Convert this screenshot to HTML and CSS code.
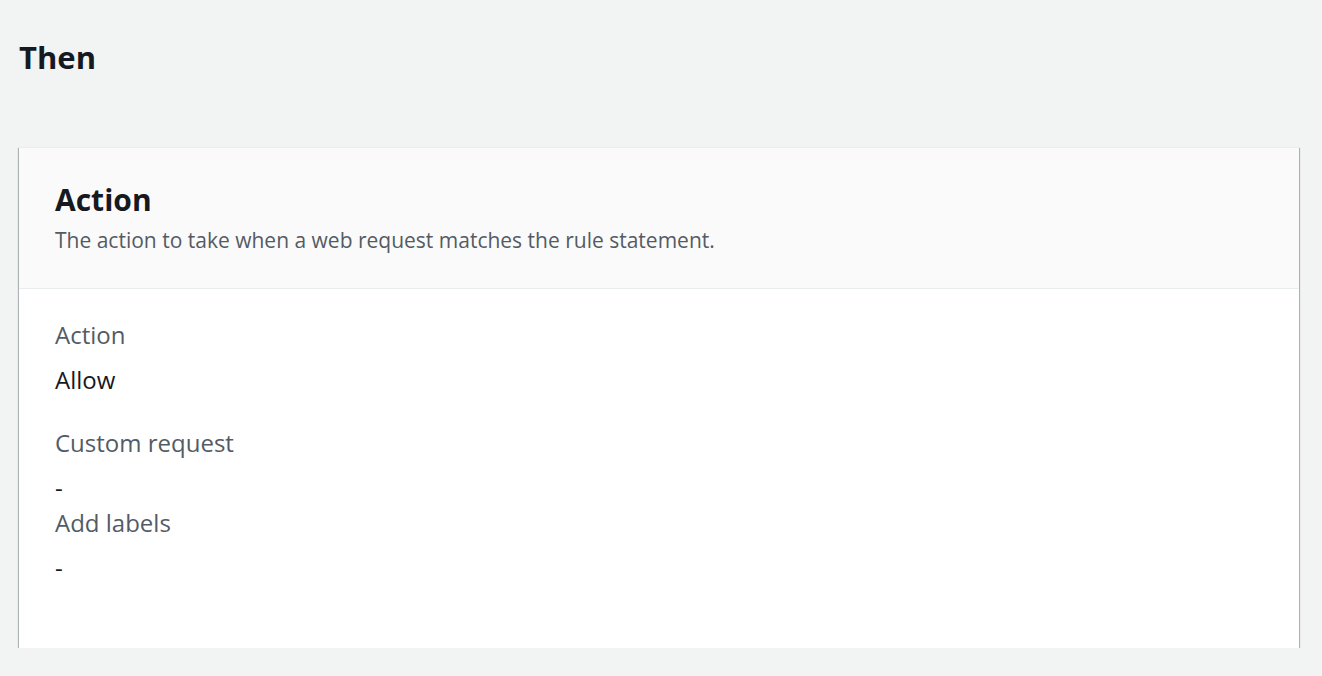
FILE: index.html
```html
<!DOCTYPE html>
<html lang="en">
<head>
<meta charset="utf-8">
<title>Then</title>
<link rel="stylesheet" href="styles.css">
</head>
<body>
<main class="page">
  <h1 class="page-title">Then</h1>
  <section class="card">
    <header class="card-header">
      <h2 class="card-title">Action</h2>
      <p class="card-desc">The action to take when a web request matches the rule statement.</p>
    </header>
    <div class="card-body">
      <div class="field">
        <div class="field-label">Action</div>
        <div class="field-value">Allow</div>
      </div>
      <div class="field field-spaced">
        <div class="field-label">Custom request</div>
        <div class="field-value">-</div>
      </div>
      <div class="field field-tight">
        <div class="field-label">Add labels</div>
        <div class="field-value">-</div>
      </div>
    </div>
  </section>
</main>
</body>
</html>
```

FILE: styles.css
```css
html, body {
  margin: 0;
  padding: 0;
  background: #f2f3f3;
}
body {
  font-family: "Open Sans", "Noto Sans", sans-serif;
  color: #16191f;
}
.page {
  padding: 39px 23px 0 19px;
}
.page-title {
  margin: 0;
  font-size: 31px;
  line-height: 36px;
  font-weight: 700;
  color: #16191f;
}
.card {
  margin-top: 72px;
  background: #ffffff;
  border-top: 1px solid #eaeded;
  box-shadow: 0 1px 1px 0 rgba(0, 28, 36, 0.55), 0 2px 1px 0 rgba(0, 28, 36, 0.15), 1px 1px 1px 0 rgba(0, 28, 36, 0.2), -1px 1px 1px 0 rgba(0, 28, 36, 0.2);
}
.card-header {
  background: #fafafa;
  border-bottom: 1px solid #eaeded;
  padding: 34px 36px 36px 36px;
}
.card-title {
  margin: 0;
  font-size: 30px;
  line-height: 36px;
  font-weight: 700;
  color: #16191f;
}
.card-desc {
  margin: 10px 0 0 0;
  font-size: 21px;
  line-height: 24px;
  color: #545b64;
}
.card-body {
  padding: 32px 36px 66px 36px;
}
.field-label {
  font-size: 24px;
  line-height: 28px;
  color: #545b64;
}
.field-value {
  margin-top: 17px;
  font-size: 24px;
  line-height: 28px;
  color: #16191f;
}
.field-spaced {
  margin-top: 35px;
}
.field-tight {
  margin-top: 7px;
}
```
